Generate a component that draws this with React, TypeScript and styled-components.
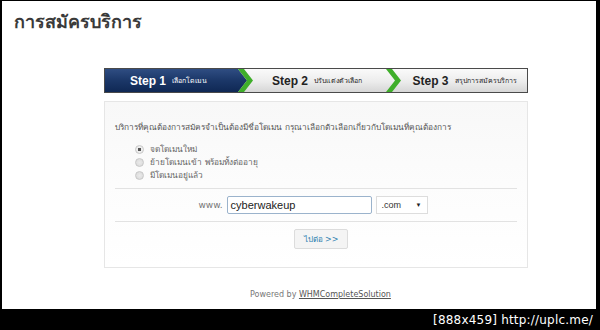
import React from "react";
import styled, { createGlobalStyle } from "styled-components";

const GlobalStyle = createGlobalStyle`
  html, body {
    margin: 0;
    padding: 0;
    background: #000;
  }
  body {
    font-family: Tahoma, "DejaVu Sans", "Noto Sans", sans-serif;
  }
`;

// Black viewer frame round the picture
const Frame = styled.div`
  width: 600px;
  height: 330px;
  background: #000;
  display: flex;
  flex-direction: column;
  padding: 1px 4px 0 2px;
  box-sizing: border-box;
`;

const Canvas = styled.div`
  height: 308px;
  background: #fff;
  display: flex;
  flex-direction: column;
  overflow: hidden;
`;

const Watermark = styled.div`
  flex: 1;
  display: flex;
  align-items: center;
  justify-content: flex-end;
  padding-right: 3px;
  color: #fff;
  font-family: "DejaVu Sans", sans-serif;
  font-size: 12px;
  letter-spacing: 0.2px;
`;

const Title = styled.h1`
  margin: 0;
  padding: 9px 0 0 12px;
  height: 67px;
  box-sizing: border-box;
  font-size: 18px;
  font-weight: bold;
  color: #3a3a3a;
  line-height: 24px;
`;

const Wizard = styled.div`
  width: 424px;
  margin-left: 102px;
  display: flex;
  flex-direction: column;
`;

const StepBar = styled.div`
  display: flex;
  height: 25px;
  border: 1px solid #4a4a4a;
  box-sizing: border-box;
`;

const Step = styled.div<{ $active?: boolean; $width: number }>`
  width: ${(p) => p.$width}px;
  display: flex;
  align-items: center;
  justify-content: center;
  gap: 6px;
  background: ${(p) =>
    p.$active
      ? "linear-gradient(to bottom, #2f4d82 0%, #1b3768 50%, #0f2854 100%)"
      : "linear-gradient(to bottom, #fafafa 0%, #ececec 55%, #d6d6d6 100%)"};
  color: ${(p) => (p.$active ? "#fff" : "#222")};
`;

const StepNo = styled.span`
  font-family: "Liberation Sans", Arial, sans-serif;
  font-weight: bold;
  font-size: 12px;
`;

const StepName = styled.span`
  font-size: 7px;
`;

const ChevronBox = styled.svg`
  display: block;
  flex: none;
`;

const Chevron = ({ left }: { left: "navy" | "gray" }) => (
  <ChevronBox width="22" height="23" viewBox="0 0 22 23" preserveAspectRatio="none">
    <defs>
      <linearGradient id={`g-${left}`} x1="0" y1="0" x2="0" y2="1">
        <stop offset="0" stopColor="#fafafa" />
        <stop offset="0.55" stopColor="#ececec" />
        <stop offset="1" stopColor="#d6d6d6" />
      </linearGradient>
      <linearGradient id={`n-${left}`} x1="0" y1="0" x2="0" y2="1">
        <stop offset="0" stopColor="#2f4d82" />
        <stop offset="0.5" stopColor="#1b3768" />
        <stop offset="1" stopColor="#0f2854" />
      </linearGradient>
    </defs>
    <rect width="22" height="23" fill={`url(#g-${left})`} />
    <polygon
      points="0,0 6,0 15,11.5 6,23 0,23"
      fill={left === "navy" ? `url(#n-${left})` : `url(#g-${left})`}
    />
    <polygon points="6,0 12,0 21,11.5 12,23 6,23 15,11.5" fill="#3fae2a" />
  </ChevronBox>
);

const Panel = styled.div`
  margin-top: 8px;
  height: 167px;
  border: 1px solid #e6e6e6;
  background: linear-gradient(to bottom, #f8f8f8 0%, #fcfcfc 50%, #fff 100%);
  box-sizing: border-box;
  padding: 20px 10px 0 10px;
  display: flex;
  flex-direction: column;
`;

const Intro = styled.p`
  margin: 0;
  font-size: 8.3px;
  color: #555;
  line-height: 10px;
`;

const Choices = styled.div`
  display: flex;
  flex-direction: column;
  gap: 3px;
  padding: 12px 0 8px 20px;
`;

const Choice = styled.label`
  display: flex;
  align-items: center;
  gap: 6px;
  height: 10px;
  font-size: 8.3px;
  color: #666;
`;

const Radio = styled.span<{ $checked?: boolean }>`
  width: 7px;
  height: 7px;
  border-radius: 50%;
  border: 1px solid #c8c8c8;
  background: ${(p) =>
    p.$checked
      ? "radial-gradient(circle, #555 0 1.6px, #eee 2px)"
      : "radial-gradient(circle, #eaeaea 0, #d8d8d8 100%)"};
`;

const Rule = styled.div`
  height: 1px;
  background: #e2e2e2;
`;

const DomainRow = styled.div`
  display: flex;
  align-items: center;
  justify-content: center;
  gap: 4px;
  height: 32px;
  padding-right: 6px;
`;

const Prefix = styled.span`
  font-size: 9px;
  color: #777;
`;

const DomainInput = styled.div`
  width: 145px;
  height: 18px;
  box-sizing: border-box;
  border: 1px solid #9bb3cc;
  border-radius: 2px;
  padding: 0 3px;
  display: flex;
  align-items: center;
  font-family: "Liberation Sans", Arial, sans-serif;
  font-size: 11px;
  color: #222;
  background: #fff;
`;

const TldSelect = styled.div`
  width: 52px;
  height: 18px;
  box-sizing: border-box;
  border: 1px solid #ddd;
  padding: 0 5px;
  display: flex;
  align-items: center;
  justify-content: space-between;
  font-family: "Liberation Sans", Arial, sans-serif;
  font-size: 9px;
  color: #333;
  background: #fff;
`;

const Caret = styled.span`
  font-size: 6px;
  color: #222;
`;

const Actions = styled.div`
  display: flex;
  justify-content: center;
  padding: 7px 0 0 10px;
`;

const NextButton = styled.button`
  width: 54px;
  height: 20px;
  border: 1px solid #dcdcdc;
  border-radius: 2px;
  background: #f4f4f4;
  color: #2e7fb0;
  font-family: inherit;
  font-size: 8px;
  padding: 0;
`;

const Footer = styled.div`
  padding: 22px 0 0 248px;
  font-size: 8px;
  color: #777;
  a {
    color: #555;
    text-decoration: underline;
  }
`;

const choices = [
  { label: "จดโดเมนใหม่", checked: true },
  { label: "ย้ายโดเมนเข้า พร้อมทั้งต่ออายุ", checked: false },
  { label: "มีโดเมนอยู่แล้ว", checked: false },
];

const App = () => (
  <>
    <GlobalStyle />
    <Frame>
      <Canvas>
        <Title>การสมัครบริการ</Title>
        <Wizard>
          <StepBar>
            <Step $active $width={127}>
              <StepNo>Step 1</StepNo>
              <StepName>เลือกโดเมน</StepName>
            </Step>
            <Chevron left="navy" />
            <Step $width={126}>
              <StepNo>Step 2</StepNo>
              <StepName>ปรับแต่งตัวเลือก</StepName>
            </Step>
            <Chevron left="gray" />
            <Step $width={125}>
              <StepNo>Step 3</StepNo>
              <StepName>สรุปการสมัครบริการ</StepName>
            </Step>
          </StepBar>
          <Panel>
            <Intro>
              บริการที่คุณต้องการสมัครจำเป็นต้องมีชื่อโดเมน กรุณาเลือกตัวเลือกเกี่ยวกับโดเมนที่คุณต้องการ
            </Intro>
            <Choices>
              {choices.map((c) => (
                <Choice key={c.label}>
                  <Radio $checked={c.checked} />
                  {c.label}
                </Choice>
              ))}
            </Choices>
            <Rule />
            <DomainRow>
              <Prefix>www.</Prefix>
              <DomainInput>cyberwakeup</DomainInput>
              <TldSelect>
                .com <Caret>▼</Caret>
              </TldSelect>
            </DomainRow>
            <Rule />
            <Actions>
              <NextButton>ไปต่อ &gt;&gt;</NextButton>
            </Actions>
          </Panel>
        </Wizard>
        <Footer>
          Powered by <a>WHMCompleteSolution</a>
        </Footer>
      </Canvas>
      <Watermark>[888x459] http://uplc.me/</Watermark>
    </Frame>
  </>
);

export default App;
